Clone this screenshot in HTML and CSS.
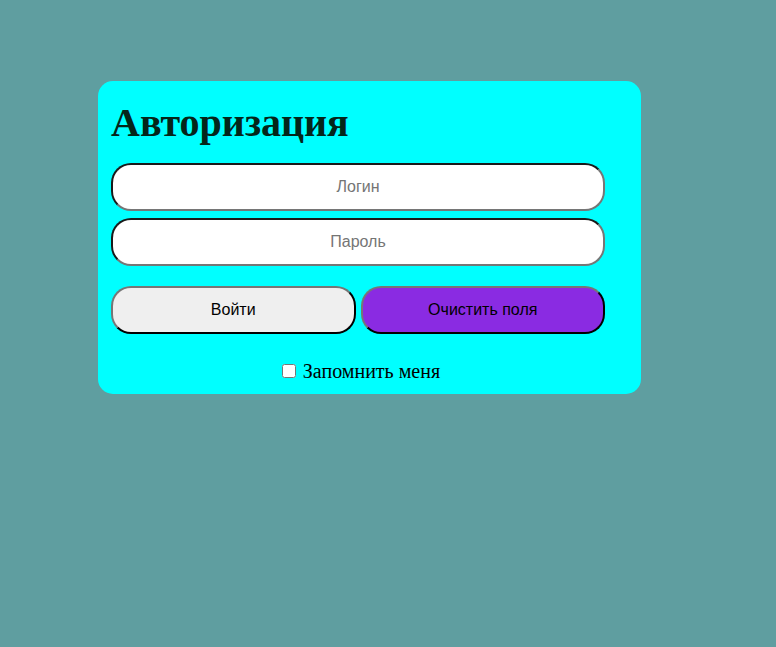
FILE: index.html
```html
<!DOCTYPE html>
<html lang="ru">
<head>
<meta charset="utf-8">
<title>Авторизация</title>
<link rel="stylesheet" href="styles.css">
</head>
<body>
<div class="card">
  <h1 class="title">Авторизация</h1>
  <form class="form">
    <input class="field" type="text" placeholder="Логин">
    <input class="field" type="password" placeholder="Пароль">
    <div class="actions">
      <button class="btn btn-login" type="button">Войти</button>
      <button class="btn btn-clear" type="reset">Очистить поля</button>
    </div>
    <label class="remember"><input class="check" type="checkbox">Запомнить меня</label>
  </form>
</div>
</body>
</html>
```
FILE: styles.css
```css
html, body {
  margin: 0;
  padding: 0;
}
body {
  background: #5f9ea0;
  min-height: 647px;
  font-family: "Liberation Serif", "Times New Roman", serif;
}
.card {
  box-sizing: border-box;
  width: 543px;
  margin: 81px 0 0 98px;
  padding: 20px 13px 11px 13px;
  background: #00ffff;
  border-radius: 15px;
}
.title {
  margin: 0;
  font-size: 40px;
  font-weight: bold;
  color: #04261a;
  line-height: 44px;
}
.form {
  width: 494px;
  margin-top: 18px;
  display: flex;
  flex-direction: column;
}
.field {
  box-sizing: border-box;
  height: 48px;
  width: 494px;
  margin: 0 0 7px 0;
  border: 2px solid;
  border-color: #1a1a1a #767676 #767676 #1a1a1a;
  border-radius: 20px;
  background: #fff;
  text-align: center;
  font-family: "Liberation Sans", Arial, sans-serif;
  font-size: 16px;
  outline: none;
}
.field::placeholder {
  color: #757575;
}
.actions {
  display: flex;
  gap: 5px;
  margin-top: 13px;
}
.btn {
  box-sizing: border-box;
  width: 245px;
  height: 48px;
  border: 2px solid;
  border-color: #767676 #000 #000 #767676;
  border-radius: 20px;
  font-family: "Liberation Sans", Arial, sans-serif;
  font-size: 16px;
  color: #000;
  padding: 0;
}
.btn-login {
  background: #efefef;
}
.btn-clear {
  background: #8a2be2;
}
.remember {
  align-self: center;
  margin: 26px 0 0 6px;
  font-size: 20px;
  line-height: 23px;
  display: flex;
  align-items: center;
}
.check {
  width: 14px;
  height: 14px;
  margin: 0 7px 2px 0;
}
```
